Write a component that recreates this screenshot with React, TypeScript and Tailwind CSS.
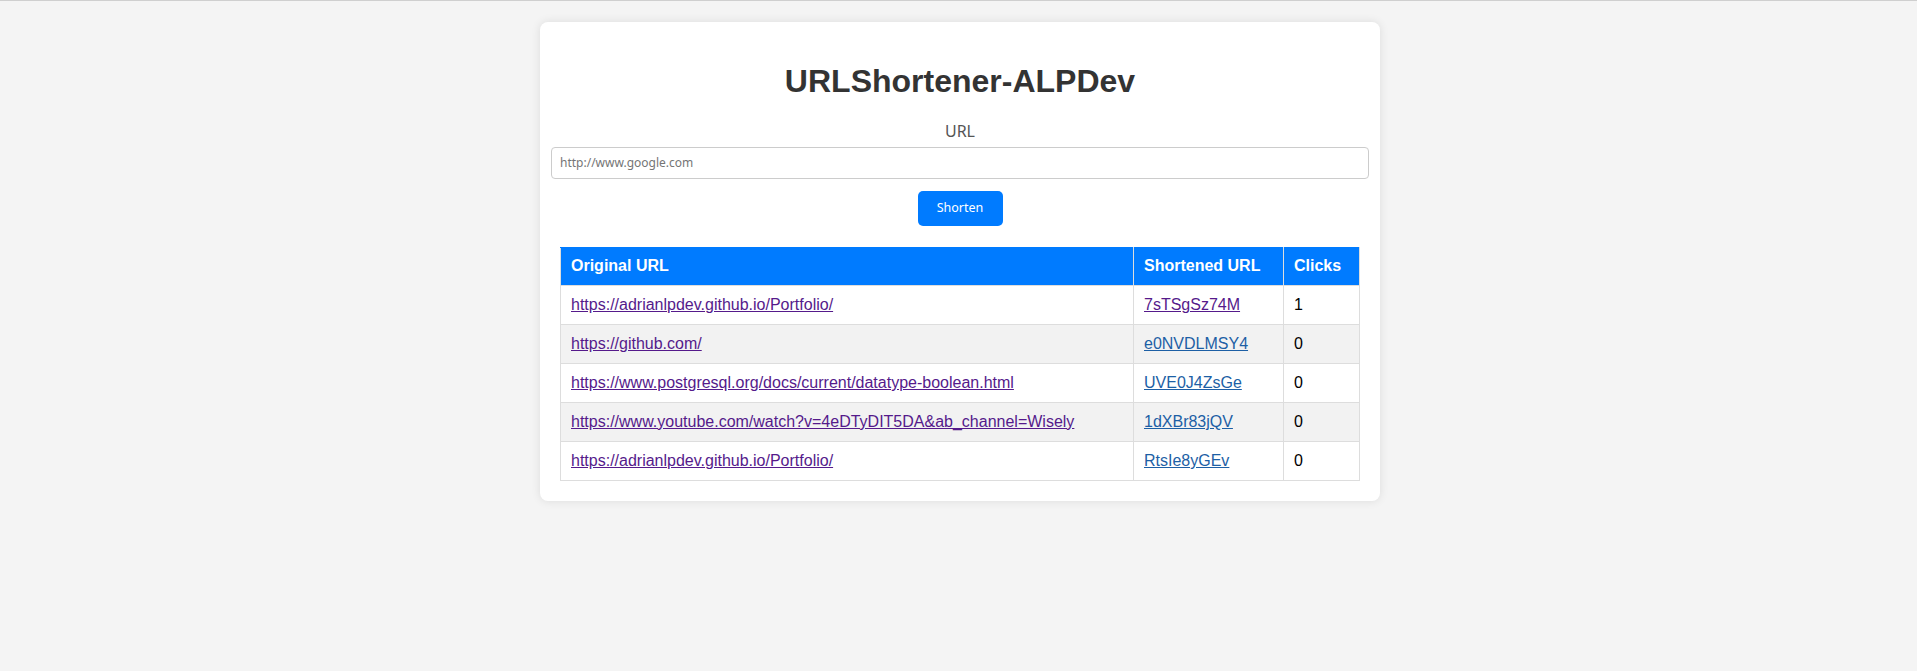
const rows = [
  { original: "https://adrianlpdev.github.io/Portfolio/", short: "7sTSgSz74M", clicks: 1, visited: true },
  { original: "https://github.com/", short: "e0NVDLMSY4", clicks: 0, visited: false },
  { original: "https://www.postgresql.org/docs/current/datatype-boolean.html", short: "UVE0J4ZsGe", clicks: 0, visited: false },
  { original: "https://www.youtube.com/watch?v=4eDTyDIT5DA&ab_channel=Wisely", short: "1dXBr83jQV", clicks: 0, visited: false },
  { original: "https://adrianlpdev.github.io/Portfolio/", short: "RtsIe8yGEv", clicks: 0, visited: false },
];

export default function App() {
  return (
    <div className="min-h-[671px] bg-[#f4f4f4] border-t border-[#cfcfcf] font-['Liberation_Sans',Arial,sans-serif] text-[#333]">
      <div className="pt-[21px] pl-[3px] flex justify-center">
        <div className="w-[840px] bg-white rounded-lg shadow-[0_0_10px_rgba(0,0,0,0.1)] p-5">
          <h1 className="text-[32px] leading-[36.8px] font-bold text-center text-[#333] my-[21.4px]">
            URLShortener-ALPDev
          </h1>

          <div className="text-center text-[16px] leading-[18.4px] text-[#555] font-['Noto_Sans',sans-serif]">
            URL
          </div>

          <input
            type="text"
            placeholder="http://www.google.com"
            className="mt-[7px] -mx-[9px] block w-[818px] h-8 px-2 border border-[#ccc] rounded text-[12px] font-['Noto_Sans',sans-serif] placeholder:text-[#757575] outline-none"
          />

          <div className="flex justify-center mt-3">
            <button className="h-[35px] w-[85px] bg-[#007bff] text-white text-[12.5px] rounded-[5px] font-['Noto_Sans',sans-serif]">
              Shorten
            </button>
          </div>

          <table className="mt-[21px] w-full border-collapse text-[16px] leading-[18px]">
            <thead>
              <tr className="bg-[#007bff] text-white">
                <th className="w-[573px] text-left font-bold px-[10px] pt-[9px] pb-[10px] border border-[#ddd] border-t-[#007bff]">Original URL</th>
                <th className="w-[150px] text-left font-bold px-[10px] pt-[9px] pb-[10px] border border-[#ddd] border-t-[#007bff]">Shortened URL</th>
                <th className="text-left font-bold px-[10px] pt-[9px] pb-[10px] border border-[#ddd] border-t-[#007bff]">Clicks</th>
              </tr>
            </thead>
            <tbody>
              {rows.map((row, i) => (
                <tr key={i} className={i % 2 === 1 ? "bg-[#f2f2f2]" : "bg-white"}>
                  <td className="p-[10px] border border-[#ddd]">
                    <a href="#" className="underline text-[#551a8b]">{row.original}</a>
                  </td>
                  <td className="p-[10px] border border-[#ddd]">
                    <a href="#" className={"underline " + (row.visited ? "text-[#551a8b]" : "text-[#1d5fa5]")}>{row.short}</a>
                  </td>
                  <td className="p-[10px] border border-[#ddd] text-black">{row.clicks}</td>
                </tr>
              ))}
            </tbody>
          </table>
        </div>
      </div>
    </div>
  );
}
